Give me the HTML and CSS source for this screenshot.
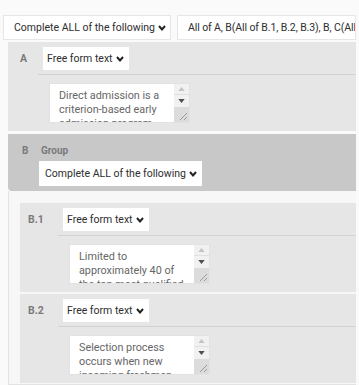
FILE: index.html
```html
<!DOCTYPE html>
<html>
<head>
<meta charset="utf-8">
<link rel="stylesheet" href="styles.css">
</head>
<body>
<div class="page">
  <div class="toolbar">
    <div class="sel sel-main">Complete ALL of the following<svg class="chev" viewBox="0 0 8 6"><polyline points="1,1 4,4.4 7,1"/></svg></div>
    <div class="sel sel-summary">All of A, B(All of B.1, B.2, B.3), B, C(All of C.1, C.2), D(All of D.1)</div>
  </div>
  <div class="tree">
    <div class="item item-top">
      <div class="item-head">
        <span class="label label-a">A</span>
        <div class="sel sel-type">Free form text<svg class="chev" viewBox="0 0 8 6"><polyline points="1,1 4,4.4 7,1"/></svg></div>
      </div>
      <div class="item-body">
        <div class="ta">
          <div class="ta-text">Direct admission is a criterion-based early admission program</div>
          <div class="ta-bar">
            <div class="ta-btn ta-up"><svg viewBox="0 0 8 5"><polygon points="0,5 4,0 8,5"/></svg></div>
            <div class="ta-btn ta-down"><svg viewBox="0 0 8 5"><polygon points="0,0 8,0 4,5"/></svg></div>
            <div class="ta-grip"><svg viewBox="0 0 15 15"><line x1="13" y1="6" x2="6" y2="13"/><line x1="13" y1="10" x2="10" y2="13"/></svg></div>
          </div>
        </div>
      </div>
    </div>
    <div class="group">
      <div class="group-head">
        <div class="group-title"><span class="label label-b">B</span><span class="group-name">Group</span></div>
        <div class="sel sel-group">Complete ALL of the following<svg class="chev" viewBox="0 0 8 6"><polyline points="1,1 4,4.4 7,1"/></svg></div>
      </div>
      <div class="group-body">
        <div class="item item-sub">
          <div class="item-head">
            <span class="label label-sub">B.1</span>
            <div class="sel sel-type">Free form text<svg class="chev" viewBox="0 0 8 6"><polyline points="1,1 4,4.4 7,1"/></svg></div>
          </div>
          <div class="item-body">
            <div class="ta">
              <div class="ta-text">Limited to approximately 40 of the top most qualified</div>
              <div class="ta-bar">
                <div class="ta-btn ta-up"><svg viewBox="0 0 8 5"><polygon points="0,5 4,0 8,5"/></svg></div>
                <div class="ta-btn ta-down"><svg viewBox="0 0 8 5"><polygon points="0,0 8,0 4,5"/></svg></div>
                <div class="ta-grip"><svg viewBox="0 0 15 15"><line x1="13" y1="6" x2="6" y2="13"/><line x1="13" y1="10" x2="10" y2="13"/></svg></div>
              </div>
            </div>
          </div>
        </div>
        <div class="item item-sub">
          <div class="item-head">
            <span class="label label-sub">B.2</span>
            <div class="sel sel-type">Free form text<svg class="chev" viewBox="0 0 8 6"><polyline points="1,1 4,4.4 7,1"/></svg></div>
          </div>
          <div class="item-body">
            <div class="ta">
              <div class="ta-text">Selection process occurs when new incoming freshmen</div>
              <div class="ta-bar">
                <div class="ta-btn ta-up"><svg viewBox="0 0 8 5"><polygon points="0,5 4,0 8,5"/></svg></div>
                <div class="ta-btn ta-down"><svg viewBox="0 0 8 5"><polygon points="0,0 8,0 4,5"/></svg></div>
                <div class="ta-grip"><svg viewBox="0 0 15 15"><line x1="13" y1="6" x2="6" y2="13"/><line x1="13" y1="10" x2="10" y2="13"/></svg></div>
              </div>
            </div>
          </div>
        </div>
      </div>
    </div>
  </div>
</div>
</body>
</html>
```

FILE: styles.css
```css
* { box-sizing: border-box; }
html, body {
  margin: 0;
  padding: 0;
  background: #fafafa;
  font-family: Roboto, "Liberation Sans", sans-serif;
  font-size: 10.5px;
  color: #333;
  overflow: hidden;
}
.page {
  width: 359px;
  height: 385px;
  padding-right: 3px;
}
.toolbar {
  display: flex;
  gap: 6px;
  padding: 15px 0 0 3px;
}
.sel {
  display: flex;
  align-items: center;
  background: #fff;
  color: #2e2e2e;
  white-space: nowrap;
  overflow: hidden;
}
.chev {
  width: 8px;
  height: 6px;
  margin-left: 3px;
  flex: none;
}
.chev polyline {
  fill: none;
  stroke: #222;
  stroke-width: 2;
}
.sel-main {
  width: 168px;
  height: 25px;
  padding-left: 10px;
  border: 1px solid #e6e6e6;
}
.sel-summary {
  flex: 1;
  height: 25px;
  padding-left: 10px;
  border: 1px solid #e6e6e6;
  letter-spacing: -0.1px;
}
.tree {
  margin: 2px 0 0 8px;
}
.item {
  background: #e6e6e6;
  padding: 5px 0 8px;
}
.item-head {
  display: flex;
  align-items: center;
  height: 23px;
}
.label {
  font-weight: bold;
  color: #7a7a7a;
}
.label-a {
  width: 35px;
  padding-left: 12px;
}
.label-sub {
  width: 43px;
  padding-left: 8px;
}
.sel-type {
  height: 23px;
  padding: 0 5px 0 4px;
}
.item-body {
  margin-top: 4px;
  border-top: 1px solid #d2d2d2;
  padding: 8px 0 0 11px;
}
.item-top .item-body { margin-left: 30px; }
.item-sub .item-body { margin-left: 38px; }
.ta {
  display: flex;
  width: 141px;
  height: 40px;
  background: #fff;
  border: 1px solid #e2e2e2;
}
.ta-text {
  flex: 1;
  overflow: hidden;
  padding: 5px 4px 0 9px;
  font-size: 10.8px;
  line-height: 14px;
  color: #666;
}
.ta-bar {
  width: 15px;
  display: flex;
  flex-direction: column;
  background: #f1f1f1;
}
.ta-btn {
  height: 11px;
  display: flex;
  align-items: center;
  justify-content: center;
}
.ta-btn svg { width: 7px; height: 4px; }
.ta-up { border-bottom: 1px solid #e0e0e0; }
.ta-up polygon { fill: #c4c4c4; }
.ta-down polygon { fill: #505050; }
.ta-grip {
  margin-top: auto;
  height: 15px;
  background: #dcdcdc;
}
.ta-grip svg { width: 15px; height: 15px; display: block; }
.ta-grip line { stroke: #9a9a9a; stroke-width: 1; }
.group {
  margin-top: 3px;
}
.group-head {
  background: #c8c8c8;
  border-radius: 0 0 0 4px;
  padding: 9px 0 5px;
}
.group-title {
  display: flex;
  align-items: center;
  height: 14px;
  font-size: 10px;
}
.label-b {
  width: 33px;
  padding-left: 14px;
}
.group-name {
  font-weight: bold;
  color: #7a7a7a;
  font-size: 10px;
}
.sel-group {
  display: inline-flex;
  height: 25px;
  margin: 4px 0 0 31px;
  padding: 0 5px 0 6px;
}
.group-body {
  background: #f7f7f7;
  border-left: 1px solid #e3e3e3;
  border-bottom: 1px solid #e3e3e3;
  padding: 12px 0 1px 11px;
  display: flex;
  flex-direction: column;
  gap: 2px;
}
```
